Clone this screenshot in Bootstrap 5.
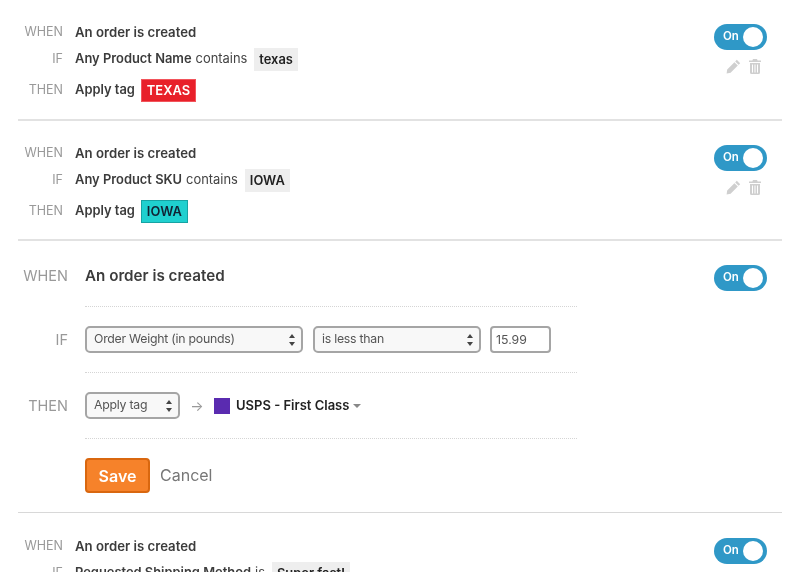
<!DOCTYPE html>
<html lang="en">
<head>
<meta charset="utf-8">
<title>Rules</title>
<link href="https://cdn.jsdelivr.net/npm/bootstrap@5.3.0/dist/css/bootstrap.min.css" rel="stylesheet">
<style>
html,body{height:572px;overflow:hidden;background:#fff}
body{font-family:Inter,"Liberation Sans",sans-serif;font-size:13.2px;color:#444}
.rule-list{margin:0 18px;filter:blur(.4px)}
.rule-item{border-bottom:2px solid #e2e2e2;display:flex;justify-content:space-between;height:121px;padding:20px 15px 0 0}
.rule-item.second{height:120px}
.rule-item.editing{height:272px;border-bottom-width:1px;border-color:#d8d8d8;padding-top:23px}
.rule-item.last{border:0;height:51px;padding-top:21px}
.cond{display:grid;grid-template-columns:45px 1fr;grid-template-rows:24px 30px 32px;column-gap:12px;align-items:center}
.cond .lbl{text-align:right;color:#999;font-size:12.5px;font-weight:400;line-height:18px}
.cond .val{line-height:18px;white-space:nowrap;display:flex;align-items:center;gap:4px}
.cond .val.tight{font-size:12.9px}
.cond .val b{font-weight:600;color:#3c3c3c}
.chip{display:inline-block;background:#eee;color:#222;font-weight:600;height:23px;line-height:23px;padding:0 5px;margin-left:3px}
.tagchip{display:inline-block;height:23px;line-height:21px;padding:0 5px;font-weight:600;border:1px solid;margin-left:2px}
.tag-red{background:#e8202a;border-color:#f2545b;color:#fff}
.tag-teal{background:#1fd0cf;border-color:#16a3a3;color:#123}
.side{display:flex;flex-direction:column;align-items:flex-end}
.side.up{margin-top:-3px}
.switcher{width:53px;height:26px;border-radius:13px;background:#2f98c7;color:#fff;font-size:11.5px;font-weight:600;display:flex;align-items:center;justify-content:space-between;padding:0 4px 0 9px;margin-top:4px}
.switcher::after{content:"";width:20px;height:20px;background:#fff;border-radius:50%}
.mini-icons{display:flex;gap:8px;justify-content:flex-end;margin-top:9px;padding-right:6px}
.mini-icons svg{display:block;fill:#cfcfcf}
.editor{display:grid;grid-template-columns:50px 492px;column-gap:17px;font-size:14px;align-content:start}
.editor .lbl{text-align:right;color:#999;font-size:14.5px;font-weight:400;align-self:center}
.editor .main{border-bottom:1px dotted #d5d5d5;display:flex;align-items:center;gap:10px}
.main.h-a{height:43px;font-weight:600;font-size:15.2px;align-items:flex-start;color:#3c3c3c;line-height:24px}
.main.h-b{height:66px}
.main.h-c{border:0!important;padding-top:19px;height:73px;align-items:flex-start}
.lbl-top{align-self:flex-start!important;line-height:24px}
.sel{appearance:none;height:27px;font-family:inherit;font-size:12.3px;letter-spacing:-.25px;color:#555;border:2px solid #a5a5a5;border-radius:5px;background:#f8f8f8 url("data:image/svg+xml,%3Csvg xmlns='http://www.w3.org/2000/svg' width='8' height='12'%3E%3Cpath d='M4 0l3 4H1zM4 12L1 8h6z' fill='%23444'/%3E%3C/svg%3E") no-repeat right 5px center;padding:0 16px 0 7px}
.w-a{width:218px}.w-b{width:168px}.w-c{width:95px}
.num{width:61px;height:27px;font-family:inherit;font-size:12.3px;color:#555;border:2px solid #a5a5a5;border-radius:4px;padding:0 4px;margin-left:-1px;background:#fff}
.arrow{color:#999;font-size:14px;width:14px;text-align:center}
.swatch{width:16px;height:16px;background:#5a2bb0;display:block}
.tagname{font-weight:600;font-size:13px;color:#222;margin-left:-4px}
.tagname::after{content:"";display:inline-block;border:4px solid transparent;border-top-color:#888;border-bottom:0;margin-left:4px;vertical-align:2px}
.btn-save{background:#f6822a;border:2px solid #d9670f;color:#fff;font-weight:600;font-size:16px;width:65px;height:35px;padding:0;border-radius:4px}
.btn-save:hover{background:#f6822a;color:#fff;border-color:#d9670f}
.cancel{color:#777;font-size:16px;line-height:35px;text-decoration:none;font-weight:400}
</style>
</head>
<body>
<div class="rule-list">

  <div class="rule-item">
    <div class="cond">
      <div class="lbl">WHEN</div><div class="val"><b>An order is created</b></div>
      <div class="lbl">IF</div><div class="val tight"><b>Any Product Name</b> contains <span class="chip">texas</span></div>
      <div class="lbl">THEN</div><div class="val tight"><b>Apply tag</b> <span class="tagchip tag-red">TEXAS</span></div>
    </div>
    <div class="side">
      <div class="switcher">On</div>
      <div class="mini-icons">
        <svg width="15" height="15" viewBox="0 0 15 15"><path d="M10.8.8l3.4 3.4-1.6 1.6-3.4-3.4zM8.4 3.2l3.4 3.4-7.2 7.2L.6 14.400l.6-4z"/></svg>
        <svg width="12" height="15" viewBox="0 0 12 15"><path d="M4 0h4l.6 1.500H12V3H0V1.500h3.400zM1 4h10v9.500a1.500 1.500 0 0 1-1.500 1.500h-7A1.500 1.500 0 0 1 1 13.500zm2 1.500v8h1v-8zm2.500 0v8h1v-8zm2.500 0v8h1v-8z" fill-rule="evenodd"/></svg>
      </div>
    </div>
  </div>

  <div class="rule-item second">
    <div class="cond">
      <div class="lbl">WHEN</div><div class="val"><b>An order is created</b></div>
      <div class="lbl">IF</div><div class="val tight"><b>Any Product SKU</b> contains <span class="chip">IOWA</span></div>
      <div class="lbl">THEN</div><div class="val tight"><b>Apply tag</b> <span class="tagchip tag-teal">IOWA</span></div>
    </div>
    <div class="side">
      <div class="switcher">On</div>
      <div class="mini-icons">
        <svg width="15" height="15" viewBox="0 0 15 15"><path d="M10.8.8l3.4 3.4-1.6 1.6-3.4-3.4zM8.4 3.2l3.4 3.4-7.2 7.2L.6 14.400l.6-4z"/></svg>
        <svg width="12" height="15" viewBox="0 0 12 15"><path d="M4 0h4l.6 1.500H12V3H0V1.500h3.400zM1 4h10v9.500a1.500 1.500 0 0 1-1.500 1.500h-7A1.500 1.500 0 0 1 1 13.500zm2 1.500v8h1v-8zm2.500 0v8h1v-8zm2.500 0v8h1v-8z" fill-rule="evenodd"/></svg>
      </div>
    </div>
  </div>

  <div class="rule-item editing">
    <div class="editor">
      <div class="lbl lbl-top">WHEN</div>
      <div class="main h-a">An order is created</div>
      <div class="lbl">IF</div>
      <div class="main h-b">
        <select class="sel w-a"><option>Order Weight (in pounds)</option></select>
        <select class="sel w-b"><option>is less than</option></select>
        <input class="num" value="15.99">
      </div>
      <div class="lbl">THEN</div>
      <div class="main h-b">
        <select class="sel w-c"><option>Apply tag</option></select>
        <span class="arrow">→</span>
        <span class="swatch"></span>
        <span class="tagname">USPS - First Class</span>
      </div>
      <div></div>
      <div class="main h-c">
        <button type="button" class="btn btn-save">Save</button>
        <a href="#" class="cancel">Cancel</a>
      </div>
    </div>
    <div class="side up">
      <div class="switcher">On</div>
    </div>
  </div>

  <div class="rule-item last">
    <div class="cond">
      <div class="lbl">WHEN</div><div class="val"><b>An order is created</b></div>
      <div class="lbl">IF</div><div class="val tight"><b>Requested Shipping Method</b> is <span class="chip">Super fast!</span></div>
    </div>
    <div class="side">
      <div class="switcher">On</div>
    </div>
  </div>

</div>
<script src="https://cdn.jsdelivr.net/npm/bootstrap@5.3.0/dist/js/bootstrap.bundle.min.js"></script>
</body>
</html>
